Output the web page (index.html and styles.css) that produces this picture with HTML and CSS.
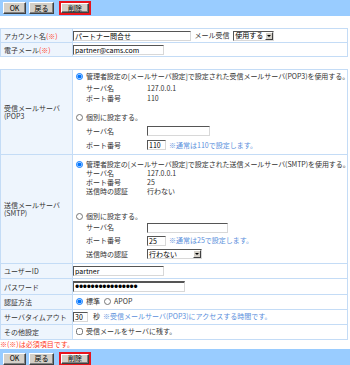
FILE: index.html
```html
<!DOCTYPE html>
<html lang="ja">
<head>
<meta charset="utf-8">
<link rel="stylesheet" href="styles.css">
</head>
<body>
<div class="bar bar-top">
  <button class="btn btn-ok">OK</button>
  <button class="btn btn-back">戻る</button>
  <span class="danger"><button class="btn btn-del">削除</button></span>
</div>

<table class="form form-1">
  <tr class="r14">
    <th>アカウント名<span class="req">(※)</span></th>
    <td class="tight">
      <input class="in in-name" value="パートナー問合せ">
      <span class="lbl-inline">メール受信</span>
      <span class="sel sel-use"><span class="sel-val">使用する</span><span class="sel-arrow"></span></span>
    </td>
  </tr>
  <tr class="r14">
    <th>電子メール<span class="req">(※)</span></th>
    <td class="tight"><input class="in in-mail" value="partner@cams.com"></td>
  </tr>
</table>

<table class="form form-2">
  <tr class="r-pop">
    <th>受信メールサーバ<br>(POP3</th>
    <td class="pad">
      <div class="opt"><input type="radio" name="pop" checked><span class="long">管理者設定の[メールサーバ設定]で設定された受信メールサーバ(POP3)を使用する。</span></div>
      <div class="info">
        <div class="kv"><span class="k">サーバ名</span><span>127.0.0.1</span></div>
        <div class="kv"><span class="k">ポート番号</span><span>110</span></div>
      </div>
      <div class="opt opt-2"><input type="radio" name="pop"><span>個別に設定する。</span></div>
      <div class="fields">
        <div class="fr"><span class="k">サーバ名</span><input class="in in-srv"></div>
        <div class="fr"><span class="k">ポート番号</span><input class="in in-port" value="110"><span class="note">※通常は110で設定します。</span></div>
      </div>
    </td>
  </tr>
  <tr class="r-smtp">
    <th>送信メールサーバ<br>(SMTP)</th>
    <td class="pad">
      <div class="opt"><input type="radio" name="smtp" checked><span class="long">管理者設定の[メールサーバ設定]で設定された送信メールサーバ(SMTP)を使用する。</span></div>
      <div class="info info-s">
        <div class="kv"><span class="k">サーバ名</span><span>127.0.0.1</span></div>
        <div class="kv"><span class="k">ポート番号</span><span>25</span></div>
        <div class="kv"><span class="k">送信時の認証</span><span>行わない</span></div>
      </div>
      <div class="opt opt-2s"><input type="radio" name="smtp"><span>個別に設定する。</span></div>
      <div class="fields fields-s">
        <div class="fr"><span class="k">サーバ名</span><input class="in in-srv2"></div>
        <div class="fr"><span class="k">ポート番号</span><input class="in in-port" value="25"><span class="note">※通常は25で設定します。</span></div>
        <div class="fr"><span class="k">送信時の認証</span><span class="sel sel-auth"><span class="sel-val">行わない</span><span class="sel-arrow"></span></span></div>
      </div>
    </td>
  </tr>
  <tr class="r15">
    <th>ユーザーID</th>
    <td class="tight"><input class="in in-user" value="partner"></td>
  </tr>
  <tr class="r16">
    <th>パスワード</th>
    <td class="tight"><input class="in in-pass" type="password" value="xxxxxxxxxxxxxxxx"></td>
  </tr>
  <tr class="r15">
    <th>認証方法</th>
    <td class="pad"><span class="radios"><input type="radio" name="auth" checked><span>標準</span><input type="radio" name="auth"><span>APOP</span></span></td>
  </tr>
  <tr class="r15">
    <th>サーバタイムアウト</th>
    <td class="tight"><input class="in in-time" value="30"><span class="unit">秒</span><span class="note">※受信メールサーバ(POP3)にアクセスする時間です。</span></td>
  </tr>
  <tr class="r15">
    <th>その他設定</th>
    <td class="pad"><span class="radios"><input type="checkbox"><span>受信メールをサーバに残す。</span></span></td>
  </tr>
</table>

<p class="req-note">※(※)は必須項目です。</p>

<div class="bar bar-bottom">
  <button class="btn btn-ok">OK</button>
  <button class="btn btn-back">戻る</button>
  <span class="danger"><button class="btn btn-del">削除</button></span>
</div>
</body>
</html>
```

FILE: styles.css
```css
* { box-sizing: border-box; }

html, body {
  margin: 0;
  padding: 0;
}

body {
  width: 350px;
  height: 365px;
  overflow: hidden;
  background: #fff;
  color: #333;
  font-family: "Noto Sans CJK JP", sans-serif;
  font-size: 7px;
  line-height: 1;
}

.bar {
  background: #99ccff;
  display: flex;
  align-items: center;
  padding-left: 3px;
}

.bar-top { height: 16px; }

.bar-bottom {
  height: 18px;
  padding-top: 1px;
}

.btn {
  font-family: inherit;
  font-size: 7px;
  line-height: 1;
  color: #000;
  height: 12px;
  padding: 0;
  background: #d4d0c8;
  border: 1px solid;
  border-color: #fff #404040 #404040 #fff;
  box-shadow: inset -1px -1px 0 #808080;
  display: inline-flex;
  align-items: center;
  justify-content: center;
}

.btn-ok { width: 23px; margin-right: 3px; }
.btn-back { width: 25px; margin-right: 5px; }
.btn-del { width: 28px; }

.danger {
  display: inline-flex;
  border: 2px solid #e8141c;
}

.danger .btn { height: 10px; }

.form {
  border-collapse: collapse;
  width: 348px;
  table-layout: fixed;
}

.form-1 { margin-top: 12px; }
.form-2 { margin-top: 12px; }

.form th,
.form td {
  border: 1px solid #c4dcf6;
  padding: 0;
  vertical-align: middle;
}

.form th {
  width: 72px;
  background: #eef5fd;
  text-align: left;
  font-weight: normal;
  padding-left: 3px;
  line-height: 8px;
  white-space: nowrap;
}

.req { color: #ff3b1f; }

.r14 { height: 14px; }
.r15 { height: 15px; }
.r16 { height: 16px; }
.r-pop { height: 85px; }
.r-smtp { height: 109px; }

td.tight {
  padding-left: 0;
  white-space: nowrap;
}

td.pad {
  padding-left: 3px;
  white-space: nowrap;
}

.in {
  font-family: inherit;
  font-size: 7px;
  height: 10px;
  padding: 0 1px;
  margin: 0;
  vertical-align: middle;
  border: 1px solid;
  border-color: #555 #d8d8d8 #d8d8d8 #555;
  color: #000;
  background: #fff;
}

.in-name { width: 118px; }
.in-mail { width: 91px; }
.in-user { width: 91px; }
.in-pass {
  width: 112px;
  height: 11px;
  border-top-width: 2px;
  font-family: "Liberation Sans", sans-serif;
  font-size: 12px;
  line-height: 7px;
  letter-spacing: -0.3px;
}
.in-srv { width: 63px; }
.in-srv2 { width: 81px; }
.in-port { width: 19px; }
.in-time { width: 15px; }

.lbl-inline {
  display: inline-block;
  margin: 0 2px 0 2px;
  vertical-align: middle;
}

.sel {
  display: inline-flex;
  vertical-align: middle;
  height: 10px;
  border: 1px solid;
  border-color: #555 #d8d8d8 #d8d8d8 #555;
  background: #fff;
  align-items: stretch;
}

.sel-use { width: 41px; }
.sel-auth { width: 55px; }

.sel-val {
  flex: 1;
  display: flex;
  align-items: center;
  padding-left: 1px;
  color: #000;
}

.sel-arrow {
  width: 8px;
  background: #d4d0c8;
  border: 1px solid;
  border-color: #fff #404040 #404040 #fff;
  position: relative;
}

.sel-arrow::after {
  content: "";
  position: absolute;
  left: 1px;
  top: 2px;
  border-left: 2px solid transparent;
  border-right: 2px solid transparent;
  border-top: 2px solid #000;
}

.opt {
  display: flex;
  align-items: center;
  height: 10px;
}

.long { letter-spacing: -0.05px; }

.opt input,
.radios input {
  width: 7px;
  height: 7px;
  margin: 0 3px 0 0;
}

.r-pop td.pad { vertical-align: top; padding-top: 1px; }
.r-smtp td.pad { vertical-align: top; padding-top: 4px; }

.info {
  padding-left: 10px;
  margin-top: 2px;
}

.kv {
  display: flex;
  height: 10px;
  align-items: center;
}

.info-s { margin-top: 0; }
.info-s .kv { height: 9px; }

.k {
  display: inline-block;
  width: 61px;
  flex: none;
}

.opt-2 { margin-top: 9px; }
.opt-2s { margin-top: 15px; }

.fields {
  padding-left: 10px;
  margin-top: 2px;
}

.fr {
  display: flex;
  align-items: center;
  height: 14px;
}

.fields-s { margin-top: 0; }
.fields-s .fr { height: 13px; }
.fields-s .fr:last-child { height: 14px; }

.note {
  color: #5b8fdc;
  margin-left: 3px;
}

.unit { margin-left: 5px; }

.radios {
  display: inline-flex;
  align-items: center;
}

.radios span { margin-right: 4px; }

.req-note {
  margin: 0;
  height: 9px;
  padding-left: 0;
  color: #ff3b1f;
  line-height: 9px;
}
```
